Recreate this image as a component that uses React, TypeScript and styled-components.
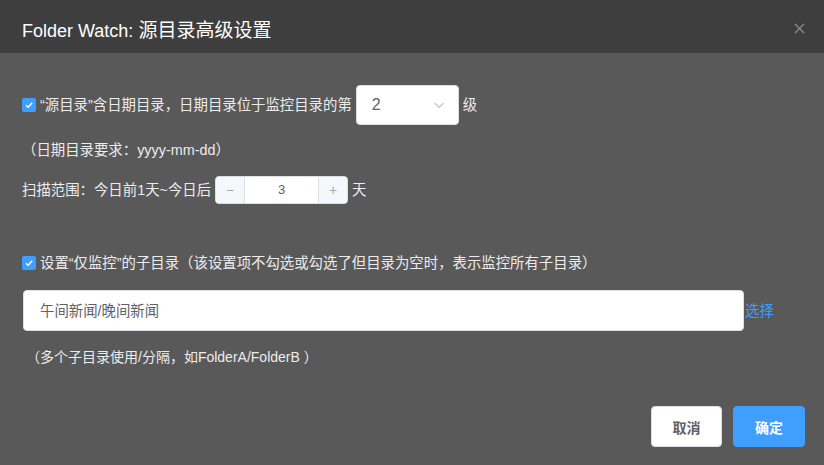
import * as React from 'react';
import styled, { createGlobalStyle } from 'styled-components';

const GlobalStyle = createGlobalStyle`
  html, body {
    margin: 0;
    padding: 0;
    background: #595959;
  }
  body {
    font-family: "Liberation Sans", "Noto Sans CJK SC", sans-serif;
    font-size: 14.4px;
    color: #ececec;
  }
  * {
    box-sizing: border-box;
  }
`;

function Check(): React.ReactElement {
  return (
    <StyledCheckbox>
      <svg width="10" height="10" viewBox="0 0 10 10">
        <path d="M2 5.2 L4.2 7.3 L8.2 2.8" fill="none" stroke="#fff" strokeWidth="1.4" />
      </svg>
    </StyledCheckbox>
  );
}

function App(): React.ReactElement {
  return (
    <>
      <GlobalStyle />
      <StyledDialog>
        <StyledHeader>
          <StyledTitle>
            Folder Watch: <StyledTitleCn>源目录高级设置</StyledTitleCn>
          </StyledTitle>
          <StyledClose aria-label="close">
            <svg width="11" height="11" viewBox="0 0 11 11">
              <path d="M1 1 L10 10 M10 1 L1 10" stroke="#8e9095" strokeWidth="1.2" />
            </svg>
          </StyledClose>
        </StyledHeader>

        <StyledBody>
          <StyledRow>
            <Check />
            <StyledLabel>“源目录”含日期目录，日期目录位于监控目录的第</StyledLabel>
            <StyledSelect>
              <span>2</span>
              <svg width="12" height="12" viewBox="0 0 12 12">
                <path d="M1.5 4 L6 8.5 L10.5 4" fill="none" stroke="#c0c4cc" strokeWidth="1.1" />
              </svg>
            </StyledSelect>
            <StyledUnit>级</StyledUnit>
          </StyledRow>

          <StyledNote $top={15} $indent={0} $size={14.4}>（日期目录要求：yyyy-mm-dd）</StyledNote>

          <StyledRow $top={16}>
            <span>扫描范围：今日前1天~今日后</span>
            <StyledNumber>
              <StyledStep $side="left">−</StyledStep>
              <StyledNumberValue>3</StyledNumberValue>
              <StyledStep $side="right">+</StyledStep>
            </StyledNumber>
            <StyledUnit>天</StyledUnit>
          </StyledRow>

          <StyledRow $top={49}>
            <Check />
            <StyledLabel>设置“仅监控”的子目录（该设置项不勾选或勾选了但目录为空时，表示监控所有子目录）</StyledLabel>
          </StyledRow>

          <StyledRow $top={17}>
            <StyledInput>午间新闻/晚间新闻</StyledInput>
            <StyledLink>选择</StyledLink>
          </StyledRow>

          <StyledNote $top={16} $indent={4} $size={14}>（多个子目录使用/分隔，如FolderA/FolderB ）</StyledNote>
        </StyledBody>

        <StyledFooter>
          <StyledButton $primary={false}>取消</StyledButton>
          <StyledButton $primary>确定</StyledButton>
        </StyledFooter>
      </StyledDialog>
    </>
  );
}

const StyledDialog = styled.div`
  width: 824px;
  height: 465px;
  background: #595959;
  display: flex;
  flex-direction: column;
  overflow: hidden;
`;

const StyledHeader = styled.header`
  height: 53px;
  background: #3e3e3e;
  display: flex;
  align-items: center;
  justify-content: space-between;
  padding: 8px 19px 0 22px;
`;

const StyledTitle = styled.h1`
  margin: 0;
  font-size: 18px;
  font-weight: 400;
  color: #ffffff;
  line-height: 24px;
`;

const StyledTitleCn = styled.span`
  font-size: 19px;
`;

const StyledClose = styled.span`
  display: flex;
  width: 11px;
  height: 11px;
  margin-top: -4px;
`;

const StyledBody = styled.main`
  display: flex;
  flex-direction: column;
  padding: 32px 22px 0 22px;
`;

const StyledRow = styled.div<{ $top?: number }>`
  display: flex;
  align-items: center;
  margin-top: ${({ $top }) => $top ?? 0}px;
  line-height: 20px;
`;

const StyledCheckbox = styled.span`
  width: 14px;
  height: 14px;
  border-radius: 2px;
  background: #409eff;
  display: flex;
  align-items: center;
  justify-content: center;
  margin-right: 4px;
  flex-shrink: 0;
`;

const StyledLabel = styled.span`
  white-space: nowrap;
`;

const StyledSelect = styled.div`
  width: 103px;
  height: 40px;
  margin-left: 4px;
  background: #fff;
  border: 1px solid #dcdfe6;
  border-radius: 4px;
  display: flex;
  align-items: center;
  justify-content: space-between;
  padding: 0 13px 0 15px;
  color: #606266;
  font-size: 16px;
`;

const StyledUnit = styled.span`
  margin-left: 4px;
`;

const StyledNote = styled.div<{ $top: number; $indent: number; $size: number }>`
  margin-top: ${({ $top }) => $top}px;
  margin-left: ${({ $indent }) => $indent}px;
  font-size: ${({ $size }) => $size}px;
  line-height: 20px;
  white-space: nowrap;
`;

const StyledNumber = styled.div`
  width: 133px;
  height: 28px;
  margin-left: 4px;
  background: #fff;
  border: 1px solid #dcdfe6;
  border-radius: 4px;
  display: flex;
  overflow: hidden;
`;

const StyledStep = styled.span<{ $side: 'left' | 'right' }>`
  width: 29px;
  background: #f5f7fa;
  color: #a8abb2;
  display: flex;
  align-items: center;
  justify-content: center;
  font-size: 14px;
  border-${({ $side }) => ($side === 'left' ? 'right' : 'left')}: 1px solid #dcdfe6;
`;

const StyledNumberValue = styled.span`
  flex: 1;
  display: flex;
  align-items: center;
  justify-content: center;
  color: #606266;
  font-size: 13px;
`;

const StyledInput = styled.div`
  width: 721px;
  height: 41px;
  margin-left: 1px;
  background: #fff;
  border: 1px solid #dcdfe6;
  border-radius: 4px;
  display: flex;
  align-items: center;
  padding: 0 16px;
  color: #606266;
`;

const StyledLink = styled.span`
  color: #409eff;
  margin-left: 1px;
`;

const StyledFooter = styled.footer`
  display: flex;
  justify-content: flex-end;
  gap: 11px;
  padding: 39px 19px 0 0;
`;

const StyledButton = styled.button<{ $primary: boolean }>`
  height: 41px;
  width: ${({ $primary }) => ($primary ? 72 : 71)}px;
  border-radius: 4px;
  border: 1px solid ${({ $primary }) => ($primary ? '#409eff' : '#dcdfe6')};
  background: ${({ $primary }) => ($primary ? '#409eff' : '#ffffff')};
  color: ${({ $primary }) => ($primary ? '#ffffff' : '#606266')};
  font-family: "Liberation Sans", "Noto Sans CJK SC", sans-serif;
  font-size: 14px;
  font-weight: 700;
  padding: 0;
`;

export default App;
